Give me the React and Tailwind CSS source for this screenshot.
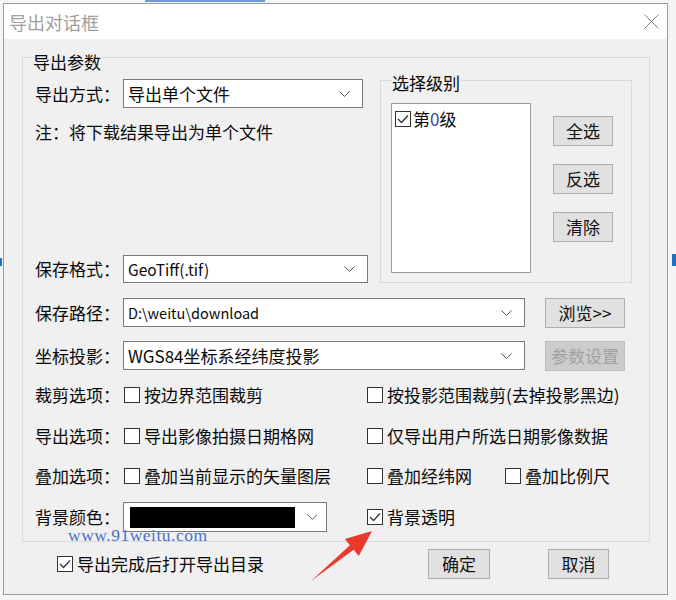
import React from "react";

function Chevron() {
  return (
    <svg width="11" height="6" viewBox="0 0 11 6">
      <path d="M0.5 0.5 L5.5 5.5 L10.5 0.5" fill="none" stroke="#555" strokeWidth="1" />
    </svg>
  );
}

function Select({ w, h = "h-[29px]", children }) {
  return (
    <div className={`flex items-center justify-between bg-white border border-[#7a7a7a] pl-[4px] pr-[12px] ${w} ${h}`}>
      <div className="flex items-center flex-1 min-w-0">{children}</div>
      <Chevron />
    </div>
  );
}

function Check({ checked }) {
  return (
    <span className="w-[16px] h-[16px] border border-[#333] bg-white flex items-center justify-center shrink-0">
      {checked && (
        <svg width="12" height="10" viewBox="0 0 12 10">
          <path d="M1 5 L4.5 8.5 L11 1.5" fill="none" stroke="#333" strokeWidth="1.3" />
        </svg>
      )}
    </span>
  );
}

function Opt({ w, checked, children }) {
  return (
    <div className={`flex items-center gap-[4px] ${w}`}>
      <Check checked={checked} />
      <span className="whitespace-nowrap">{children}</span>
    </div>
  );
}

function Btn({ w, disabled, children }) {
  return (
    <div
      className={`h-[30px] ${w} flex items-center justify-center border text-[17px] ${
        disabled ? "bg-[#cccccc] border-[#bfbfbf] text-[#a0a0a0]" : "bg-[#e1e1e1] border-[#adadad] text-[#111]"
      }`}
    >
      {children}
    </div>
  );
}

const label = "w-[88px] shrink-0 whitespace-nowrap";

export default function App() {
  return (
    <div className="relative w-[676px] h-[600px] overflow-hidden bg-[#f5f5f5] font-['Noto_Sans_CJK_SC',sans-serif] text-[17px] text-[#0a0a0a] leading-[20px]">
      {/* bits of windows behind the dialog */}
      <div className="absolute left-0 top-[258px] w-[2px] h-[8px] bg-[#1f6fc4]" />
      <div className="absolute right-0 top-[254px] w-[4px] h-[12px] bg-[#1f6fc4]" />
      <div className="absolute left-[145px] top-0 w-[120px] h-[2px] bg-[#6b9bd0]" />

      <div className="ml-[3px] mt-[3px] w-[665px] h-[592px] border border-[#9c9c9c] bg-[#f0f0f0] flex flex-col">
        {/* title bar */}
        <div className="h-[35px] bg-white flex items-center justify-between pl-[5px] pr-[8px]">
          <span className="text-[18px] text-[#a0a0a0]">导出对话框</span>
          <svg width="15" height="15" viewBox="0 0 15 15">
            <path d="M0.5 0.5 L14.5 14.5 M14.5 0.5 L0.5 14.5" stroke="#808080" strokeWidth="1" />
          </svg>
        </div>

        {/* group: 导出参数 */}
        <div className="mt-[18px] ml-[18px] w-[628px] border border-[#d9d9d9] pb-[9px]">
          <div className="-mt-[6px] ml-[9px] w-fit bg-[#f0f0f0] px-[1px] h-[20px]">导出参数</div>

          <div className="flex items-start">
            <div className="pl-[12px] w-[345px] flex flex-col">
              <div className="mt-[7px] flex items-center h-[29px]">
                <span className={label}>导出方式：</span>
                <Select w="w-[240px]">导出单个文件</Select>
              </div>
              <div className="mt-[14px] h-[20px] whitespace-nowrap">注：将下载结果导出为单个文件</div>
              <div className="mt-[113px] flex items-center h-[28px]">
                <span className={label}>保存格式：</span>
                <Select w="w-[245px]" h="h-[28px]">
                  <span className="text-[15.5px]">GeoTiff(.tif)</span>
                </Select>
              </div>
            </div>

            <div className="ml-[12px] mt-[8px] w-[252px] h-[203px] border border-[#d9d9d9]">
              <div className="-mt-[8px] ml-[10px] w-fit bg-[#f0f0f0] px-[1px] h-[20px]">选择级别</div>
              <div className="flex">
                <div className="ml-[10px] mt-[10px] w-[140px] h-[170px] bg-white border border-[#9a9a9a] pl-[3px] pt-[5px]">
                  <div className="flex items-center gap-[2px]">
                    <Check checked />
                    <span>第<span className="text-[#3a4a8a]">0</span>级</span>
                  </div>
                </div>
                <div className="ml-[22px] mt-[23px] flex flex-col gap-[18px]">
                  <Btn w="w-[60px]">全选</Btn>
                  <Btn w="w-[60px]">反选</Btn>
                  <Btn w="w-[60px]">清除</Btn>
                </div>
              </div>
            </div>
          </div>

          <div className="pl-[12px] flex flex-col">
            <div className="mt-[15px] flex items-center h-[29px]">
              <span className={label}>保存路径：</span>
              <Select w="w-[402px]">
                <span className="text-[14.5px]">D:\weitu\download</span>
              </Select>
              <div className="ml-[20px]">
                <Btn w="w-[80px]">浏览&gt;&gt;</Btn>
              </div>
            </div>
            <div className="mt-[14px] flex items-center h-[29px]">
              <span className={label}>坐标投影：</span>
              <Select w="w-[402px]">
                <span className="text-[17px]">WGS84坐标系经纬度投影</span>
              </Select>
              <div className="ml-[20px]">
                <Btn w="w-[80px]" disabled>参数设置</Btn>
              </div>
            </div>
            <div className="mt-[15px] flex items-center h-[20px]">
              <span className={label}>裁剪选项：</span>
              <Opt w="w-[243px] ml-[1px]">按边界范围裁剪</Opt>
              <Opt w="w-[260px]">按投影范围裁剪(去掉投影黑边)</Opt>
            </div>
            <div className="mt-[21px] flex items-center h-[20px]">
              <span className={label}>导出选项：</span>
              <Opt w="w-[243px] ml-[1px]">导出影像拍摄日期格网</Opt>
              <Opt w="w-[260px]">仅导出用户所选日期影像数据</Opt>
            </div>
            <div className="mt-[20px] flex items-center h-[20px]">
              <span className={label}>叠加选项：</span>
              <Opt w="w-[243px] ml-[1px]">叠加当前显示的矢量图层</Opt>
              <Opt w="w-[138px]">叠加经纬网</Opt>
              <Opt w="w-[120px]">叠加比例尺</Opt>
            </div>
            <div className="mt-[16px] flex items-center h-[30px]">
              <span className={label}>背景颜色：</span>
              <div className="w-[204px] h-[30px] bg-white border border-[#7a7a7a] flex items-center pl-[6px] pr-[8px] gap-[12px]">
                <div className="w-[171px] h-[21px] bg-black" />
                <Chevron />
              </div>
              <Opt w="w-[200px] ml-[40px]" checked>背景透明</Opt>
            </div>
          </div>
        </div>

        {/* footer */}
        <div className="mt-[7px] flex items-center h-[30px]">
          <div className="ml-[53px] w-[371px] flex items-center gap-[4px]">
            <Check checked />
            <span>导出完成后打开导出目录</span>
          </div>
          <Btn w="w-[62px]">确定</Btn>
          <div className="ml-[58px]">
            <Btn w="w-[61px]">取消</Btn>
          </div>
        </div>
      </div>

      {/* watermark and annotation arrow drawn over the screenshot */}
      <span className="absolute left-[68px] top-[528px] font-['Liberation_Serif',serif] text-[17.5px] tracking-[0.5px] text-[#4b6fd1] leading-[15px]">
        www.91weitu.com
      </span>
      <svg className="absolute left-0 top-0" width="676" height="600" viewBox="0 0 676 600">
        <polygon
          points="311,581 349.9,545.2 344.8,539 372,531 358.8,556 353.7,549.8"
          fill="#ea3a2e"
        />
      </svg>
    </div>
  );
}
